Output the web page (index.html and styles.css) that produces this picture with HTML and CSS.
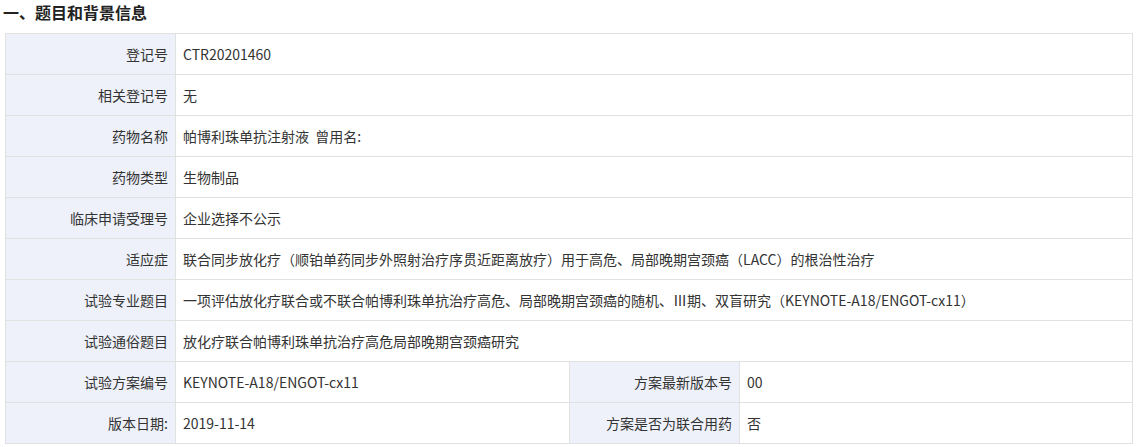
FILE: index.html
```html
<!DOCTYPE html>
<html lang="zh-CN">

<head>
    <meta charset="UTF-8">
    <title>题目和背景信息</title>
    <link rel="stylesheet" href="styles.css">
</head>

<body>

    <h3 class="section-title">一、题目和背景信息</h3>

    <table class="info-table">
        <colgroup>
            <col class="col-label">
            <col class="col-value">
            <col class="col-label">
            <col>
        </colgroup>
        <tr>
            <th>登记号</th>
            <td colspan="3">CTR20201460</td>
        </tr>
        <tr>
            <th>相关登记号</th>
            <td colspan="3">无</td>
        </tr>
        <tr>
            <th>药物名称</th>
            <td colspan="3">帕博利珠单抗注射液&nbsp; 曾用名:</td>
        </tr>
        <tr>
            <th>药物类型</th>
            <td colspan="3">生物制品</td>
        </tr>
        <tr>
            <th>临床申请受理号</th>
            <td colspan="3">企业选择不公示</td>
        </tr>
        <tr>
            <th>适应症</th>
            <td colspan="3">联合同步放化疗（顺铂单药同步外照射治疗序贯近距离放疗）用于高危、局部晚期宫颈癌（LACC）的根治性治疗</td>
        </tr>
        <tr>
            <th>试验专业题目</th>
            <td colspan="3">一项评估放化疗联合或不联合帕博利珠单抗治疗高危、局部晚期宫颈癌的随机、Ⅲ期、双盲研究（KEYNOTE-A18/ENGOT-cx11）</td>
        </tr>
        <tr>
            <th>试验通俗题目</th>
            <td colspan="3">放化疗联合帕博利珠单抗治疗高危局部晚期宫颈癌研究</td>
        </tr>
        <tr>
            <th>试验方案编号</th>
            <td>KEYNOTE-A18/ENGOT-cx11</td>
            <th>方案最新版本号</th>
            <td>00</td>
        </tr>
        <tr>
            <th>版本日期:</th>
            <td>2019-11-14</td>
            <th>方案是否为联合用药</th>
            <td>否</td>
        </tr>
    </table>

</body>

</html>
```

FILE: styles.css
```css
body {
    margin: 0;
    padding: 0 7px 0 5px;
    font-family: "Noto Sans CJK SC", sans-serif;
    font-size: 14px;
    color: #333;
    background: #fff;
}

.section-title {
    margin: 0 0 0 -2px;
    padding: 0;
    height: 33px;
    line-height: normal;
    font-size: 16px;
    font-weight: bold;
    color: #222;
}

.info-table {
    width: 1128px;
    border-collapse: collapse;
    table-layout: fixed;
}

.col-label {
    width: 170px;
}

.col-value {
    width: 394px;
}

.info-table th,
.info-table td {
    height: 40px;
    padding: 0 7px;
    border: 1px solid #e1e1e1;
    font-weight: normal;
    white-space: nowrap;
}

.info-table th {
    text-align: right;
    background-color: #eef1f9;
}

.info-table td {
    text-align: left;
}
```
